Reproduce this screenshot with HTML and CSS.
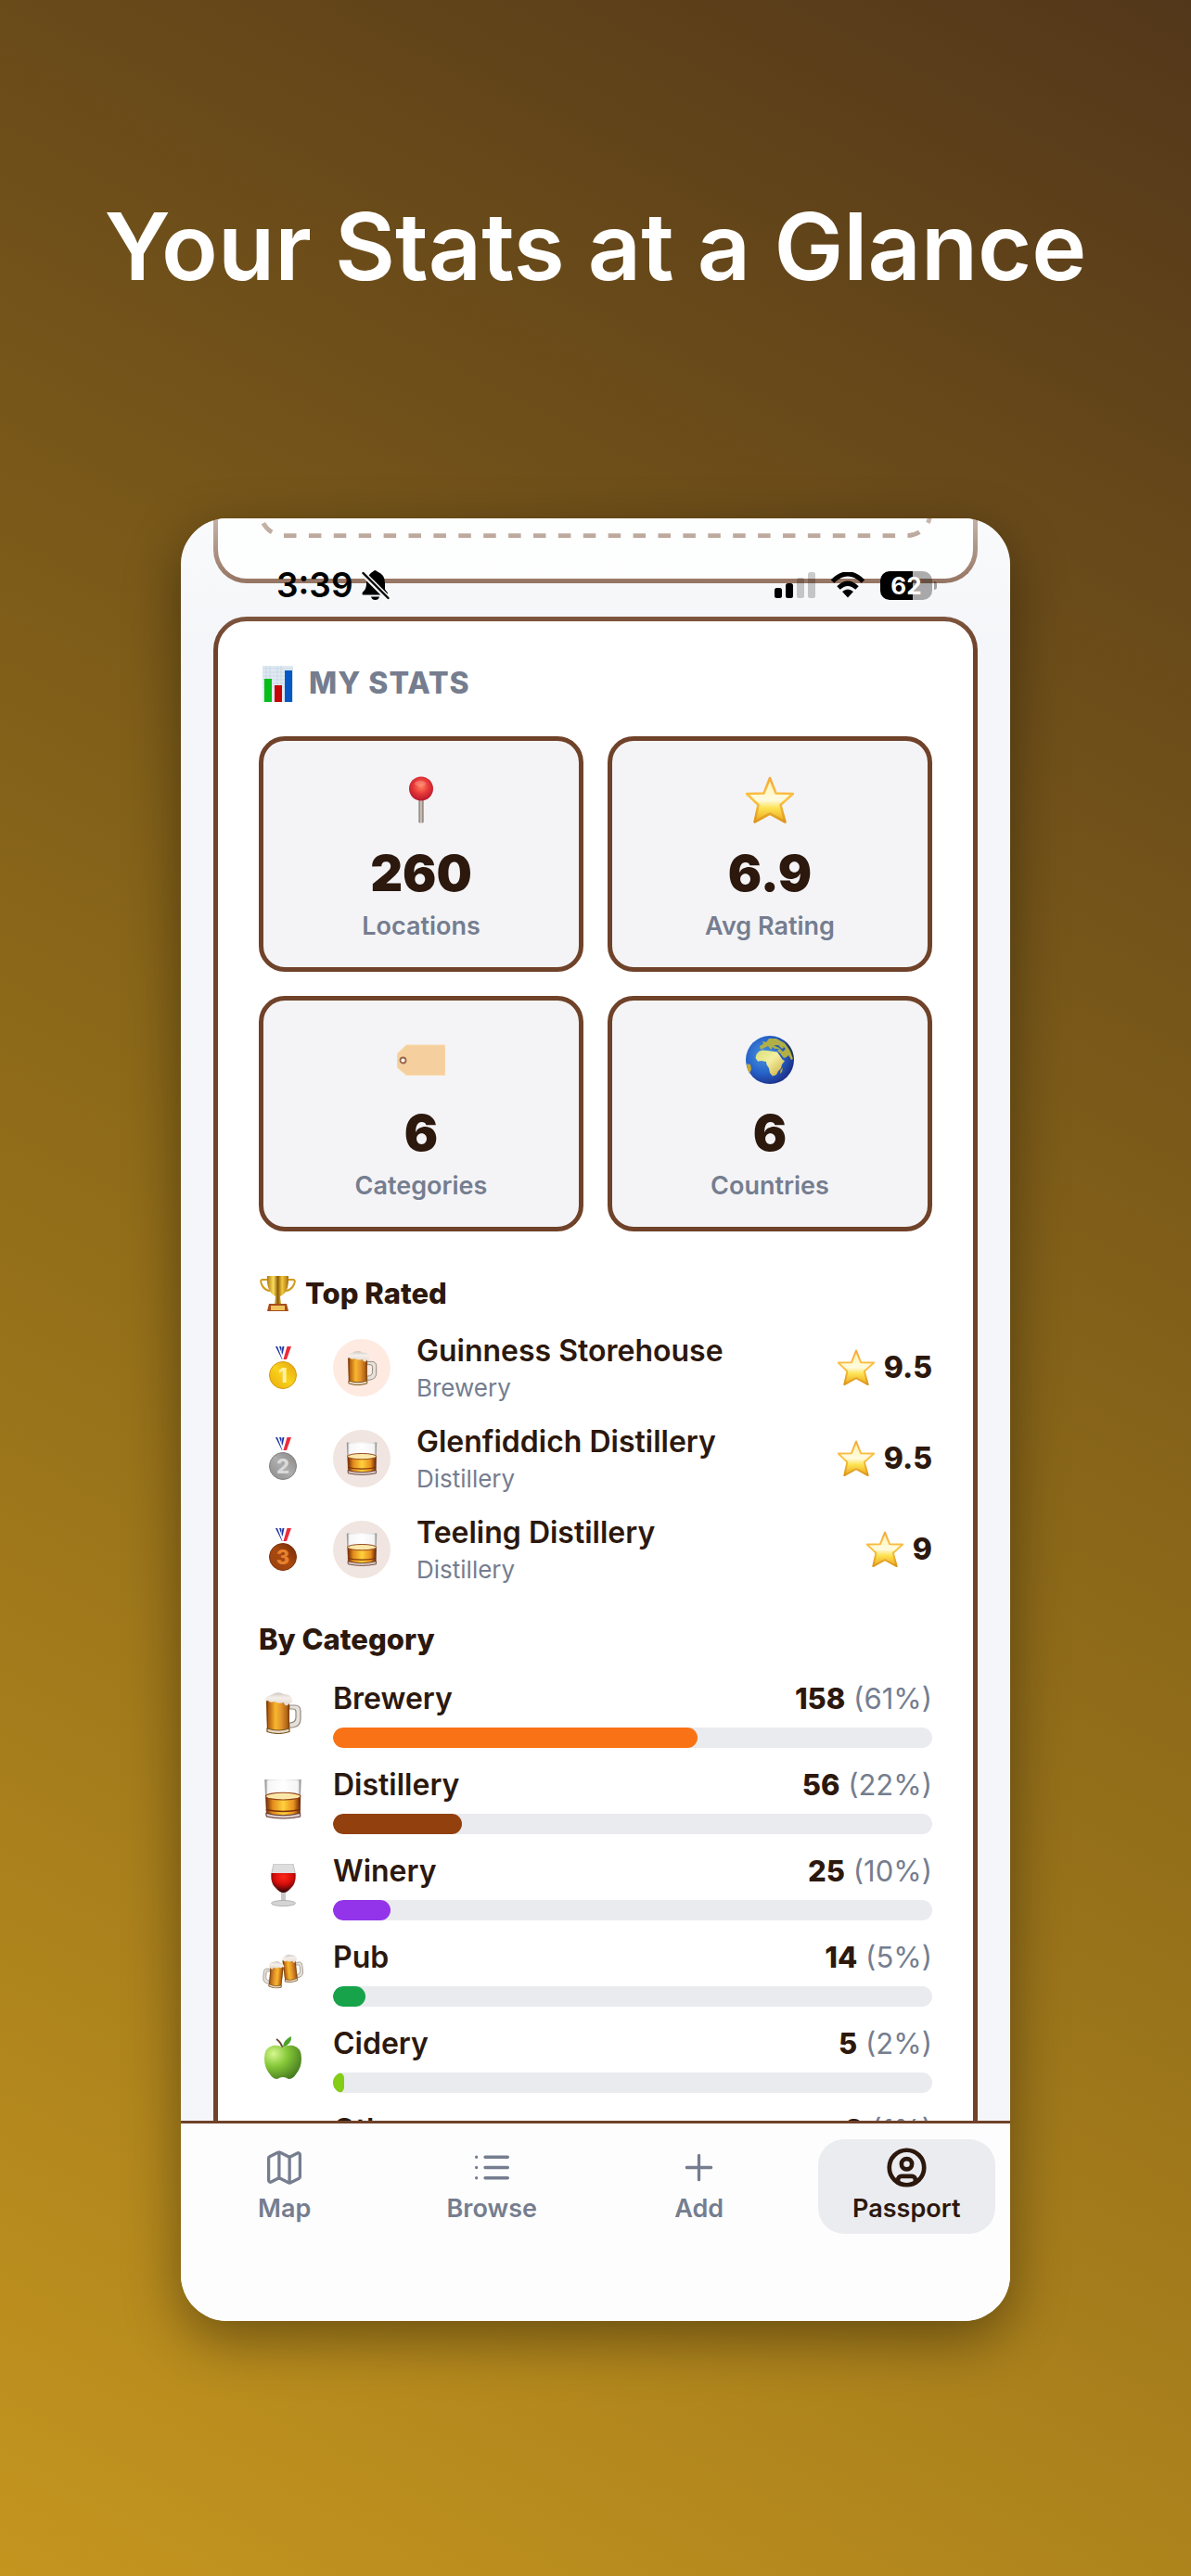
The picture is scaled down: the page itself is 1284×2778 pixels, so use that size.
FILE: index.html
```html
<!DOCTYPE html>
<html lang="en">
<head>
<meta charset="utf-8">
<meta name="viewport" content="width=device-width, initial-scale=1">
<title>Your Stats at a Glance</title>
<link rel="stylesheet" href="styles.css">
</head>
<body>
<svg class="sprite" aria-hidden="true">
  <defs>
    <linearGradient id="g-star" x1="0" y1="0" x2="0" y2="1"><stop offset="0" stop-color="#fff3b0"/><stop offset=".5" stop-color="#fffbe0"/><stop offset=".68" stop-color="#fde353"/><stop offset="1" stop-color="#eda51c"/></linearGradient>
    <linearGradient id="g-star-edge" x1="0" y1="0" x2="0" y2="1"><stop offset="0" stop-color="#f6a93b"/><stop offset=".5" stop-color="#fbc445"/><stop offset="1" stop-color="#dc961b"/></linearGradient>
    <linearGradient id="g-beer"><stop offset="0" stop-color="#8f4a0c"/><stop offset=".2" stop-color="#cf7a18"/><stop offset=".4" stop-color="#f5b82c"/><stop offset=".65" stop-color="#e5932c"/><stop offset="1" stop-color="#98500f"/></linearGradient>
    <linearGradient id="g-foam" x1="0" y1="0" x2="0" y2="1"><stop offset="0" stop-color="#cfc6bd"/><stop offset=".4" stop-color="#f4efeb"/><stop offset="1" stop-color="#e3d8cd"/></linearGradient>
    <linearGradient id="g-whisky"><stop offset="0" stop-color="#6b2408"/><stop offset=".2" stop-color="#e28a1c"/><stop offset=".5" stop-color="#ffd23c"/><stop offset=".8" stop-color="#e88f1e"/><stop offset="1" stop-color="#5e1d08"/></linearGradient>
    <linearGradient id="g-glass"><stop offset="0" stop-color="#8b8b8b"/><stop offset=".12" stop-color="#e3e3e3"/><stop offset=".5" stop-color="#fbfbfb"/><stop offset=".88" stop-color="#dedede"/><stop offset="1" stop-color="#8b8b8b"/></linearGradient>
    <radialGradient id="g-wine" cx=".5" cy=".2" r=".75"><stop offset="0" stop-color="#ff2a1a"/><stop offset=".5" stop-color="#d50d0b"/><stop offset="1" stop-color="#3c0606"/></radialGradient>
    <radialGradient id="g-apple" cx=".25" cy=".25" r=".85"><stop offset="0" stop-color="#d6f78f"/><stop offset=".45" stop-color="#85c738"/><stop offset="1" stop-color="#467a20"/></radialGradient>
    <radialGradient id="g-pin" cx=".5" cy=".4" r=".6"><stop offset="0" stop-color="#ff8560"/><stop offset=".5" stop-color="#e93a3a"/><stop offset="1" stop-color="#b5182c"/></radialGradient>
    <linearGradient id="g-needle"><stop offset="0" stop-color="#6d655d"/><stop offset=".5" stop-color="#ddd4cc"/><stop offset="1" stop-color="#6d5c50"/></linearGradient>
    <radialGradient id="g-sea" cx=".38" cy=".4" r=".65"><stop offset="0" stop-color="#4a97dd"/><stop offset=".6" stop-color="#2560c8"/><stop offset="1" stop-color="#1c2f86"/></radialGradient>
    <linearGradient id="g-land" x1="0" y1="0" x2="1" y2="1"><stop offset="0" stop-color="#d9de7c"/><stop offset=".45" stop-color="#f3efa0"/><stop offset="1" stop-color="#c9a93b"/></linearGradient>
    <linearGradient id="g-cup"><stop offset="0" stop-color="#b17a10"/><stop offset=".3" stop-color="#fbdf5c"/><stop offset=".5" stop-color="#8d5c0b"/><stop offset=".7" stop-color="#f4c93c"/><stop offset="1" stop-color="#a46d0d"/></linearGradient>
    <linearGradient id="g-gold" x1="0" y1="1" x2="1" y2="0"><stop offset="0" stop-color="#e8a90c"/><stop offset=".5" stop-color="#f9d21a"/><stop offset="1" stop-color="#e3a10d"/></linearGradient>
    <linearGradient id="g-silver" x1="0" y1="1" x2="1" y2="0"><stop offset="0" stop-color="#8b8b8b"/><stop offset=".5" stop-color="#adadad"/><stop offset="1" stop-color="#858585"/></linearGradient>
    <linearGradient id="g-bronze" x1="0" y1="1" x2="1" y2="0"><stop offset="0" stop-color="#9a420d"/><stop offset=".5" stop-color="#a8480f"/><stop offset="1" stop-color="#702b08"/></linearGradient>
    <symbol id="star" viewBox="0 0 52 52">
      <path d="M26 2 32.5 18.5 51 19 37.5 31 42.5 49.500 26 40.500 9.500 49.500 13.500 31 1 19 19.500 18.500Z" fill="url(#g-star)" stroke="url(#g-star-edge)" stroke-width="2.600" stroke-linejoin="round"/>
    </symbol>
    <symbol id="beer" viewBox="0 0 46 46">
      <path d="M30 15h6q6 0 6 6v9q0 8-9 9h-3v-5q7 0 7-6v-6q0-3-3-3h-4z" fill="#e6e1da" stroke="#938a80" stroke-width="1.200"/>
      <path d="M5 9h25v34q-12 4-24 0z" fill="url(#g-beer)"/>
      <path d="M5 9h2v33H6zM28 9h2v33h-1z" fill="#6d370b" opacity=".6"/>
      <path d="M6 40q12 4 24 0v3.500q-12 4-24 0z" fill="#e9dcc6" stroke="#7c5520" stroke-width="1.200"/>
      <path d="M3.500 9Q5 5 10 4q7-5 14-1 8 0 9 6 0 4-3 4l-2 2q-3 1-4-3-6 2-10-1-5 2-7-1-3 1-3.500-1z" fill="url(#g-foam)"/>
    </symbol>
    <symbol id="whisky" viewBox="-1 -1 48 48">
      <path d="M2.500 1h41l-1.500 41q-18 6-38 0z" fill="url(#g-glass)"/>
      <path d="M5 2.500h36V18q-18-4-36 0z" fill="#fff" opacity=".7"/>
      <path d="M3.500 19h39.500l-.5 21q-19 6-38 0z" fill="url(#g-whisky)"/>
      <ellipse cx="23.200" cy="20" rx="19.500" ry="4" fill="#fbe8a8" stroke="#94421a" stroke-width="1.200"/>
      <path d="M4 35q19 4 38.500 0" fill="none" stroke="#7a3109" stroke-width="1.500"/>
      <path d="M4 39q19 5 38.500 0v4q-19 4-38 0z" fill="#d7cbc8" stroke="#5d2c24" stroke-width="1"/>
    </symbol>
    <symbol id="ribbon" viewBox="0 0 30 16">
      <path d="M7 0h6l5 14h-4z" fill="#1e35a5"/><path d="M9 0h2l5 14h-1.500z" fill="#fff"/>
      <path d="M17 0h-3l-1 6 2 8 3-1 6-13z" fill="#fff"/><path d="M19.500 0H24l-5 14h-3.500z" fill="#ee2b3b"/><path d="M14.500 0h2l-2 9-1-3z" fill="#1e35a5"/>
    </symbol>
  </defs>
</svg>

<main class="page">
  <h1 class="headline">Your Stats at a Glance</h1>

  <section class="phone" aria-label="Passport screen">
    <div class="content">
      <div class="stamp-card">
        <svg class="stamp-edge" viewBox="0 0 726 21" aria-hidden="true"><g fill="none" stroke="#6f4229" stroke-opacity=".92" stroke-width="4.800"><path d="M27 18.600H699a25 25 0 0 0 25-25" stroke-dasharray="13.500 13.400"/><path d="M27 18.600A25 25 0 0 1 2-6" stroke-dasharray="13.500" stroke-dashoffset="13.500"/></g></svg>
      </div>

      <article class="stats-card">
        <h2 class="card-title">
          <svg class="title-icon" viewBox="0 0 40 40" aria-hidden="true"><path d="M4 1h33v39H4z" fill="#dfe9f1"/><path d="M4 4h33M4 8h33M4 12h33M4 16h33M4 20h33M4 24h33M8 1v39M12 1v39M20 1v39M24 1v39" stroke="#c4d5e2" stroke-width=".7"/><path d="M6 15h8v25H6z" fill="#06bd1b"/><path d="M17 22h8v18h-8z" fill="#c50505"/><path d="M28 6h8v34h-8z" fill="#0558c4"/></svg>
          MY STATS
        </h2>

        <ul class="tiles">
          <li class="tile">
            <svg class="tile-icon" viewBox="0 0 52 52" aria-hidden="true"><path d="M23.500 24h5v26q-2.500 1-5 0z" fill="url(#g-needle)"/><circle cx="26" cy="13.500" r="13" fill="url(#g-pin)"/><ellipse cx="25" cy="8" rx="6" ry="3" fill="#ffb0a0" opacity=".35"/></svg>
            <strong class="tile-value">260</strong>
            <span class="tile-label">Locations</span>
          </li>
          <li class="tile">
            <svg class="tile-icon" aria-hidden="true"><use href="#star"/></svg>
            <strong class="tile-value">6.9</strong>
            <span class="tile-label">Avg Rating</span>
          </li>
          <li class="tile">
            <svg class="tile-icon" viewBox="0 0 52 52" aria-hidden="true"><path d="M0 19.500 10 10H52V42.500H10L0 34z" fill="#f6cf9e" stroke="#fbdcae" stroke-width="1"/><circle cx="6.500" cy="26.500" r="3" fill="#fff" stroke="#9b6548" stroke-width="1.800"/></svg>
            <strong class="tile-value">6</strong>
            <span class="tile-label">Categories</span>
          </li>
          <li class="tile">
            <svg class="tile-icon" viewBox="0 0 52 52" aria-hidden="true"><circle cx="26" cy="26" r="26" fill="url(#g-sea)"/><path d="M14 17 18 15.500 27 16.500 34 17.500 37 21 40 26 42 27 39 31 38 35 35 38 33 42 29 43.500 26 40 25 35 22.500 31 22 28 17 27 13 27.500 10.500 24 11.500 20Z" fill="url(#g-land)"/><path d="M16 15 15 11 19 9 18 6 22 7 25 3 33 3 42 8 48 16 51 25 49 26 46 21 44 23 41 24 37 19 34 16 36 14 31 14 29 12 27 15 24 11 20 13Z" fill="#b0b046"/><path d="M30 10.500 35 10 39 14 41 13 40 11 43 14 40 17 36 13ZM34.500 18 36 18 41 25 39.500 25.500Z" fill="#235bb8"/><path d="M37.500 37 40 34.500 39 39 37 41ZM1 30 5 31 6 36 4 41Q1 36 1 30Z" fill="#c5a932"/><path d="M40 4Q53 13 51.500 27 49 17 40 4Z" fill="#26330e" opacity=".45"/></svg>
            <strong class="tile-value">6</strong>
            <span class="tile-label">Countries</span>
          </li>
        </ul>

        <h3 class="section-title rated-title">
          <svg class="title-icon" viewBox="0 0 40 40" aria-hidden="true"><path d="M10 5H4Q1 5 3 10q3 7 10 7M31 5h6q3 0 1 5-3 7-10 7" fill="none" stroke="#d19a1d" stroke-width="2"/><path d="M9 1h23q1 18-9 22l1 8h-7l1-8Q8 18 9 1z" fill="url(#g-cup)"/><path d="M11 31h19l2 8H9z" fill="#a84d1c"/><path d="M13 33h15v5H13z" fill="#f1c45b"/></svg>
          Top Rated
        </h3>
        <ol class="rated">
          <li class="rated-row">
            <svg class="medal" viewBox="0 0 30 46" aria-hidden="true"><use href="#ribbon" width="30" height="16"/><circle cx="15" cy="31" r="14.500" fill="url(#g-gold)" stroke="#d79a12"/><text class="medal-digit" x="15" y="39" fill="#fff0a0">1</text></svg>
            <span class="badge badge-brewery"><svg class="badge-icon" aria-hidden="true"><use href="#beer"/></svg></span>
            <div class="place"><span class="place-name">Guinness Storehouse</span><span class="place-type">Brewery</span></div>
            <span class="score"><svg class="score-star" aria-hidden="true"><use href="#star"/></svg>9.5</span>
          </li>
          <li class="rated-row">
            <svg class="medal" viewBox="0 0 30 46" aria-hidden="true"><use href="#ribbon" width="30" height="16"/><circle cx="15" cy="31" r="14.500" fill="url(#g-silver)" stroke="#808080"/><text class="medal-digit" x="15" y="39" fill="#d9d9d9">2</text></svg>
            <span class="badge badge-distillery"><svg class="badge-icon" aria-hidden="true"><use href="#whisky"/></svg></span>
            <div class="place"><span class="place-name">Glenfiddich Distillery</span><span class="place-type">Distillery</span></div>
            <span class="score"><svg class="score-star" aria-hidden="true"><use href="#star"/></svg>9.5</span>
          </li>
          <li class="rated-row">
            <svg class="medal" viewBox="0 0 30 46" aria-hidden="true"><use href="#ribbon" width="30" height="16"/><circle cx="15" cy="31" r="14.500" fill="url(#g-bronze)" stroke="#7c320b"/><text class="medal-digit" x="15" y="39" fill="#e6812e">3</text></svg>
            <span class="badge badge-distillery"><svg class="badge-icon" aria-hidden="true"><use href="#whisky"/></svg></span>
            <div class="place"><span class="place-name">Teeling Distillery</span><span class="place-type">Distillery</span></div>
            <span class="score"><svg class="score-star" aria-hidden="true"><use href="#star"/></svg>9</span>
          </li>
        </ol>

        <h3 class="section-title category-title">By Category</h3>
        <ul class="categories">
          <li class="category">
            <svg class="category-icon" aria-hidden="true"><use href="#beer"/></svg>
            <div class="category-body">
              <div class="category-head"><span>Brewery</span><span class="count"><b>158</b> (61%)</span></div>
              <div class="bar"><div class="fill brewery" style="width:60.8%"></div></div>
            </div>
          </li>
          <li class="category">
            <svg class="category-icon" aria-hidden="true"><use href="#whisky"/></svg>
            <div class="category-body">
              <div class="category-head"><span>Distillery</span><span class="count"><b>56</b> (22%)</span></div>
              <div class="bar"><div class="fill distillery" style="width:21.5%"></div></div>
            </div>
          </li>
          <li class="category">
            <svg class="category-icon" viewBox="0 0 46 46" aria-hidden="true"><path d="M21 30h5v12h-5z" fill="#c9c9c9"/><ellipse cx="23.500" cy="42.500" rx="13" ry="3" fill="#d4d4d4" stroke="#a5a5a5" stroke-width=".8"/><path d="M13 0h21q6 20-3 27-4 4-7.500 4T16 27Q7 20 13 0z" fill="#dedede" stroke="#b7b7b7" stroke-width=".8"/><path d="M10.500 10h26q1 11-5 16-4 5-8 5t-8-5q-6-5-5-16z" fill="url(#g-wine)"/></svg>
            <div class="category-body">
              <div class="category-head"><span>Winery</span><span class="count"><b>25</b> (10%)</span></div>
              <div class="bar"><div class="fill winery" style="width:9.6%"></div></div>
            </div>
          </li>
          <li class="category">
            <svg class="category-icon" viewBox="0 0 46 46" aria-hidden="true"><g transform="translate(19 5) rotate(-6) scale(.56 .68)"><use href="#beer" width="46" height="46"/></g><g transform="translate(27 12) rotate(5) scale(-.56 .66)"><use href="#beer" width="46" height="46"/></g></svg>
            <div class="category-body">
              <div class="category-head"><span>Pub</span><span class="count"><b>14</b> (5%)</span></div>
              <div class="bar"><div class="fill pub" style="width:5.4%"></div></div>
            </div>
          </li>
          <li class="category">
            <svg class="category-icon" viewBox="0 0 46 46" aria-hidden="true"><path d="M23 14Q21 6 16 3" fill="none" stroke="#6a4433" stroke-width="2"/><path d="M23 12q0-8 9-12 1 8-9 12z" fill="#4da32a"/><path d="M23 12q5-3 11-2 9 2 9 14 0 10-6 17-3 5-8 5-3-2-6-2t-6 2q-5 0-8-5-6-7-6-17Q3 12 12 10q6-1 11 2z" fill="url(#g-apple)"/></svg>
            <div class="category-body">
              <div class="category-head"><span>Cidery</span><span class="count"><b>5</b> (2%)</span></div>
              <div class="bar"><div class="fill cidery" style="width:1.9%"></div></div>
            </div>
          </li>
          <li class="category">
            <svg class="category-icon" aria-hidden="true"><use href="#beer"/></svg>
            <div class="category-body">
              <div class="category-head"><span>Other</span><span class="count"><b>2</b> (1%)</span></div>
              <div class="bar"><div class="fill pub" style="width:0.8%"></div></div>
            </div>
          </li>
        </ul>
      </article>
    </div>

    <div class="status-bar">
      <span class="clock">3:39</span>
      <svg class="bell" viewBox="0 0 30 32" aria-hidden="true"><path d="M8 5Q10 2 12 1.500q2-3 5 0 8 3 8 12v7l3 4v2H1q-1-1 0-3 4-3 4-9 0-6 3-9.500z"/><path d="M10 28.500h9q-1 3.500-4.500 3.500T10 28.500z"/><path d="M-1 1 29 31" stroke="#f9fafa" stroke-width="6"/><path d="M1.500 3 28.500 30" stroke="#000" stroke-width="2.400" stroke-linecap="round"/></svg>
      <svg class="signal" viewBox="0 0 44 32" aria-hidden="true"><rect y="19" width="8" height="11" rx="2.500"/><rect x="12" y="14" width="8" height="16" rx="2.500"/><g opacity=".2"><rect x="24" y="8" width="8" height="22" rx="2.500"/><rect x="36" y="2" width="8" height="28" rx="2.500"/></g></svg>
      <svg class="wifi" viewBox="0 0 38 28" aria-hidden="true"><path d="M2.500 10Q19-6.500 35.500 10M9 17Q19 7.500 29 17" fill="none" stroke="#000" stroke-width="5"/><path d="M13 21q6-5 12 0l-6 6.500z"/></svg>
      <span class="battery">62</span>
    </div>

    <nav class="tabs" aria-label="Main">
      <a class="tab" href="#map"><svg class="tab-icon" viewBox="0 0 24 24" aria-hidden="true"><path d="M14.106 5.553a2 2 0 0 0 1.788 0l3.659-1.830A1 1 0 0 1 21 4.619v12.764a1 1 0 0 1-.553.894l-4.553 2.277a2 2 0 0 1-1.788 0l-4.212-2.106a2 2 0 0 0-1.788 0l-3.659 1.830A1 1 0 0 1 3 19.381V6.618a1 1 0 0 1 .553-.894l4.553-2.277a2 2 0 0 1 1.788 0z"/><path d="M15 5.764v15M9 3.236v15"/></svg>Map</a>
      <a class="tab" href="#browse"><svg class="tab-icon" viewBox="0 0 24 24" aria-hidden="true"><path d="M8 6h13M8 12h13M8 18h13M3 6h.01M3 12h.01M3 18h.01"/></svg>Browse</a>
      <a class="tab" href="#add"><svg class="tab-icon" viewBox="0 0 24 24" aria-hidden="true"><path d="M5 12h14M12 5v14"/></svg>Add</a>
      <a class="tab active" href="#passport" aria-current="page"><svg class="tab-icon" viewBox="0 0 24 24" aria-hidden="true"><circle cx="12" cy="12" r="10"/><circle cx="12" cy="10" r="3"/><path d="M7 20.662V19a2 2 0 0 1 2-2h6a2 2 0 0 1 2 2v1.662"/></svg>Passport</a>
    </nav>
  </section>
</main>
</body>
</html>
```
FILE: styles.css
```css
:root {
  --brown: #6f4229;
  --ink: #2c180d;
  --muted: #757d8f;
}

* { box-sizing: border-box; }

body {
  margin: 0;
  min-height: 100vh;
  background: linear-gradient(208deg, #53371a 0%, #8b6819 50%, #c4951f 100%);
  color: var(--ink);
  font-family: Inter, "Liberation Sans", sans-serif;
  font-size: 32px;
  line-height: 46px;
}

h1, h2, h3, ul, ol { margin: 0; padding: 0; }
ul, ol { list-style: none; }
svg { display: block; flex: none; }
.sprite { position: absolute; width: 0; height: 0; }

.page { padding: 206px 195px 275px; }

.headline {
  margin: 0 -195px 233px;
  color: #fff;
  font-size: 100px;
  font-weight: 600;
  line-height: 120px;
  text-align: center;
}

.phone {
  position: relative;
  display: flex;
  flex-direction: column;
  aspect-ratio: 894 / 1944;
  overflow: hidden;
  border-radius: 50px;
  background: #f5f6f9;
  box-shadow: 0 20px 60px rgba(0, 0, 0, 0.4);
}

.content {
  flex: 1;
  min-height: 0;
  overflow: hidden;
  padding: 0 35px;
}

.stamp-card {
  margin-bottom: 36px;
  padding: 0 44px 44px;
  border: solid var(--brown);
  border-width: 0 5px 5px;
  border-radius: 0 0 36px 36px;
  background: #fff;
}
.stamp-edge { width: 100%; }

.stats-card {
  padding: 44px;
  border: 5px solid var(--brown);
  border-radius: 36px;
  background: #fff;
}

.card-title, .section-title {
  display: flex;
  align-items: center;
  font-weight: 800;
  line-height: 46px;
}
.card-title {
  gap: 14px;
  margin-bottom: 34px;
  color: var(--muted);
  font-size: 32px;
  letter-spacing: 1px;
}
.section-title { font-size: 31px; }
.title-icon { width: 40px; height: 40px; }

.tiles {
  display: grid;
  grid-template-columns: 1fr 1fr;
  gap: 26px;
}
.tile {
  display: flex;
  flex-direction: column;
  align-items: center;
  padding: 38px 20px 22px;
  border: 5px solid var(--brown);
  border-radius: 28px;
  background: #f4f4f7;
}
.tile-icon { width: 52px; height: 52px; margin-bottom: 18px; }
.tile-value { font-size: 54px; font-weight: 900; line-height: 70px; }
.tile-label { color: var(--muted); font-size: 27px; font-weight: 600; line-height: 44px; }

.rated-title { gap: 10px; margin: 44px 0 17px; }
.rated { display: grid; gap: 18px; }
.rated-row { display: flex; align-items: center; gap: 28px; }
.medal { width: 52px; height: 46px; }
.medal-digit { font-size: 22px; font-weight: 800; text-anchor: middle; }
.badge {
  display: grid;
  place-items: center;
  width: 62px;
  height: 62px;
  border-radius: 50%;
}
.badge-icon { width: 38px; height: 38px; }
.badge-brewery { background: #feeae0; }
.badge-distillery { background: #f0e5e0; }
.place { display: flex; flex: 1; flex-direction: column; }
.place-name { font-weight: 600; line-height: 44px; }
.place-type { color: var(--muted); font-size: 26px; line-height: 36px; }
.score { display: flex; align-items: center; gap: 10px; font-weight: 800; }
.score-star { width: 40px; height: 40px; }

.category-title { margin: 34px 0 18px; }
.categories { display: grid; gap: 17px; }
.category { display: flex; align-items: center; gap: 28px; }
.category-icon { width: 52px; height: 46px; }
.category-body { flex: 1; }
.category-head {
  display: flex;
  justify-content: space-between;
  margin-bottom: 8px;
  font-weight: 600;
}
.count { color: var(--muted); font-size: 31px; font-weight: 400; }
.count b { color: var(--ink); font-weight: 800; }
.bar { height: 22px; overflow: hidden; border-radius: 11px; background: #eaebef; }
.fill { height: 100%; border-radius: 11px; }
.brewery { background: #f97316; }
.distillery { background: #92400e; }
.winery { background: #9333ea; }
.pub { background: #16a34a; }
.cidery { background: #84cc16; }

/* Status bar floats over the scrolled content */
.status-bar {
  position: absolute;
  inset: 0 0 auto;
  display: flex;
  align-items: center;
  height: 142px;
  padding: 2px 84px 0 103px;
  background: linear-gradient(rgba(252, 253, 253, 0.6), rgba(252, 253, 253, 0.28) 48%, rgba(252, 253, 253, 0.1) 75%, rgba(252, 253, 253, 0));
  color: #000;
}
.clock { font-size: 37px; font-weight: 600; }
.bell { width: 30px; height: 32px; margin: 0 auto 0 9px; }
.signal { width: 44px; height: 32px; }
.wifi { width: 38px; height: 28px; margin: 0 16px; }
.battery {
  position: relative;
  width: 56px;
  height: 31px;
  border-radius: 10px;
  background: linear-gradient(90deg, #000 63%, rgba(0, 0, 0, 0.32) 63%);
  color: #fff;
  font-size: 26px;
  font-weight: 700;
  line-height: 31px;
  text-align: center;
}
.battery::after {
  content: "";
  position: absolute;
  top: 11px;
  right: -5px;
  width: 3px;
  height: 9px;
  border-radius: 0 3px 3px 0;
  background: rgba(0, 0, 0, 0.35);
}

.tabs {
  display: grid;
  grid-template-columns: repeat(4, 1fr);
  padding: 17px 0 94px;
  border-top: 3px solid var(--brown);
  background: #fdfdfd;
}
.tab {
  display: flex;
  flex-direction: column;
  align-items: center;
  gap: 4px;
  margin: 0 16px;
  padding: 8px 0 9px;
  border-radius: 28px;
  color: var(--muted);
  font-size: 27px;
  font-weight: 600;
  line-height: 36px;
  text-decoration: none;
}
.tab-icon {
  width: 45px;
  height: 45px;
  fill: none;
  stroke: currentColor;
  stroke-width: 1.75;
  stroke-linecap: round;
  stroke-linejoin: round;
}
.active { background: #ebecf0; color: var(--ink); }
.active .tab-icon { stroke-width: 2.5; }
```
